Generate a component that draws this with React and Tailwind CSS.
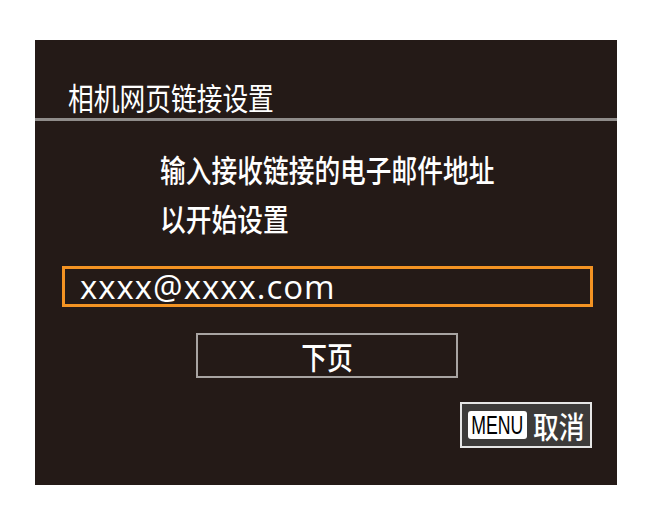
import React from "react";

const cjk = "font-['Noto_Sans_CJK_SC',sans-serif]";

export default function App() {
  return (
    <div className="w-[652px] h-[525px] bg-white pt-[40px] pl-[35px]">
      <div className={`w-[582px] h-[445px] bg-[#241a17] flex flex-col text-white font-medium ${cjk}`}>
        {/* title bar */}
        <div className="pl-[33px] pt-[41px] h-[78px]">
          <div className="text-[31px] font-normal leading-none scale-x-[0.83] origin-left">相机网页链接设置</div>
        </div>
        <div className="h-[3px] bg-[#8f8c8a]" />

        {/* message */}
        <div className="mt-[23px] ml-[125px] text-[31px] leading-[49px] scale-x-[0.83] origin-left">
          <div>输入接收链接的电子邮件地址</div>
          <div>以开始设置</div>
        </div>

        {/* email field */}
        <div className="mt-[24px] ml-[27px] w-[531px] h-[41px] border-[3px] border-[#f39323] flex items-center pl-[15px]">
          <span className="font-['Open_Sans',sans-serif] font-normal text-[33px] leading-none tracking-[1px]">xxxx@xxxx.com</span>
        </div>

        {/* next page */}
        <div className="mt-[26px] ml-[161px] w-[262px] h-[45px] border-2 border-[#a8a4a2] flex items-center justify-center">
          <span className="text-[31px] leading-none scale-x-[0.83]">下页</span>
        </div>

        {/* cancel */}
        <div className="mt-[24px] ml-[425px] w-[132px] h-[46px] border-2 border-[#e6e6e6] bg-[#3d3b3a] flex items-center pl-[6px] whitespace-nowrap">
          <div className="shrink-0 w-[59px] h-[28px] rounded-[3px] bg-white flex items-center justify-center">
            <span className="font-['Liberation_Sans',sans-serif] text-[26px] leading-none text-black scale-x-[0.68]">MENU</span>
          </div>
          <span className="shrink-0 ml-[6px] text-[30px] leading-none scale-x-[0.86] origin-left">取消</span>
        </div>
      </div>
    </div>
  );
}
